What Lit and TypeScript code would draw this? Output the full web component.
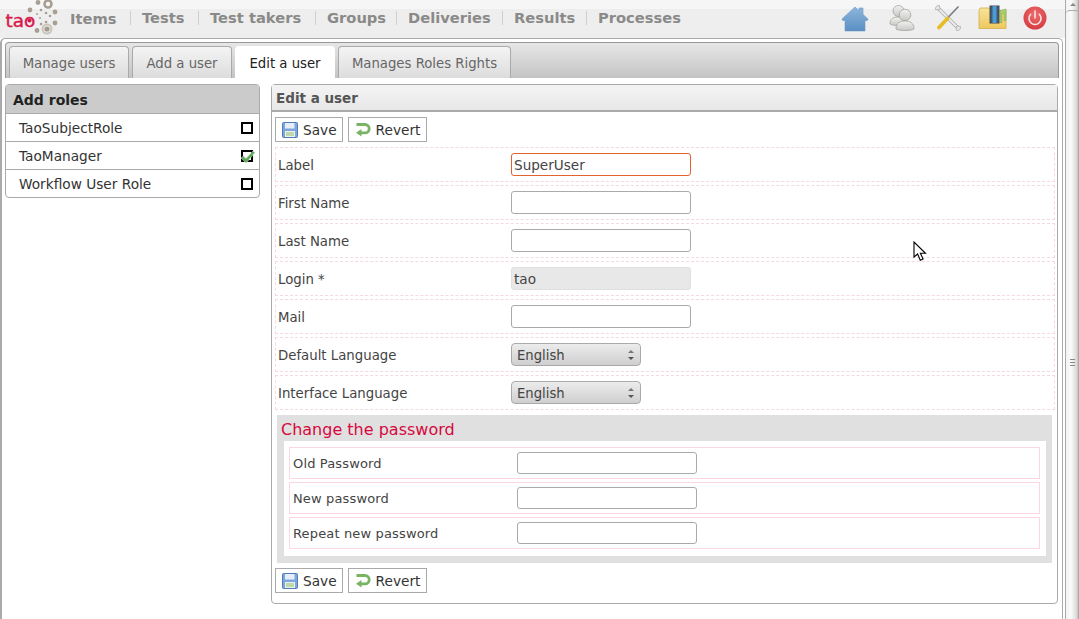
import { LitElement, css, html, svg } from 'lit';
import { customElement } from 'lit/decorators.js';

// widths read off the reference, the hinted text there doesn't scale evenly
const NAV = [
  { name: 'Items', width: 48 },
  { name: 'Tests', width: 44 },
  { name: 'Test takers', width: 93 },
  { name: 'Groups', width: 57 },
  { name: 'Deliveries', width: 82 },
  { name: 'Results', width: 60 },
  { name: 'Processes', width: 82 },
];
const TABS = [
  { name: 'Manage users', width: 120 },
  { name: 'Add a user', width: 100 },
  { name: 'Edit a user', width: 100 },
  { name: 'Manages Roles Rights', width: 173 },
];
const ROLES = [
  { name: 'TaoSubjectRole', checked: false },
  { name: 'TaoManager', checked: true },
  { name: 'Workflow User Role', checked: false },
];
const PASSWORDS = ['Old Password', 'New password', 'Repeat new password'];

const logo = svg`<svg width="60" height="38" viewBox="0 0 60 38">
  <circle cx="48" cy="5" r="3.500" fill="none" stroke="#a89f92" stroke-width="2.600"/>
  <circle cx="47" cy="30" r="2.600" fill="#a3998c"/>
  <circle cx="47" cy="30" r="4.500" fill="none" stroke="#c9c3b9" stroke-width="2"/>
  <circle cx="38" cy="3.500" r="2.400" fill="#a89f92"/><circle cx="30" cy="11" r="2.400" fill="#a89f92"/>
  <circle cx="55" cy="13" r="2.400" fill="#a89f92"/><circle cx="55" cy="24" r="2.400" fill="#a89f92"/>
  <circle cx="37" cy="31.500" r="2.400" fill="#a89f92"/><circle cx="41" cy="11" r="1.300" fill="#a89f92"/>
  <circle cx="46" cy="14" r="1.300" fill="#a89f92"/><circle cx="50" cy="17" r="1.300" fill="#a89f92"/>
  <circle cx="46" cy="23" r="1.300" fill="#a89f92"/><circle cx="41" cy="25" r="1.300" fill="#a89f92"/>
  <circle cx="37" cy="15" r="1" fill="#a89f92"/><circle cx="40" cy="19" r="1" fill="#a89f92"/>
  <text x="5.500" y="27.500" font-family="'DejaVu Sans', sans-serif" font-size="18.500" fill="#d8174a" stroke="#d8174a" stroke-width=".4">tao</text>
  <circle cx="29.500" cy="21.500" r="2" fill="#d8174a"/>
</svg>`;

const homeIcon = svg`<svg width="28" height="28" viewBox="0 0 28 28">
  <defs><linearGradient id="h" x1="0" y1="0" x2="0" y2="1"><stop offset="0" stop-color="#8db6dc"/><stop offset="1" stop-color="#5a8fc3"/></linearGradient></defs>
  <path d="M1 15 14 3l4 3.600V4h4v6.400L27 15l-.6 1.400H24V27H4V16.400H1.600z" fill="url(#h)" stroke="#6b97c2" stroke-width=".6"/>
</svg>`;

const usersIcon = svg`<svg width="28" height="28" viewBox="0 0 28 28">
  <defs><linearGradient id="u" x1="0" y1="0" x2="0" y2="1"><stop offset="0" stop-color="#f2f2f0"/><stop offset="1" stop-color="#c8c8c5"/></linearGradient></defs>
  <g fill="url(#u)" stroke="#a3a3a0" stroke-width=".8">
    <circle cx="10.500" cy="7" r="5.500"/><path d="M2 20c0-5 3-7 8-7s8 2 8 7c-3 2-13 2-16 0z"/>
    <circle cx="17" cy="11" r="5.800"/><path d="M8 25c0-6 4-8 9-8s9 2 9 8c-3 2-15 2-18 0z"/>
  </g>
</svg>`;

const toolsIcon = svg`<svg width="28" height="28" viewBox="0 0 28 28">
  <path d="M5 5 23 23" stroke="#a8a8a8" stroke-width="3.400" stroke-linecap="round"/>
  <path d="M5 5 23 23" stroke="#ececec" stroke-width="2" stroke-linecap="round"/>
  <path d="M1.500 5.500 5 6l1-1-.5-3.500C3 1 1 3 1.500 5.500zM26.500 22.500 23 22l-1 1 .5 3.500c2.500.5 4.500-1.500 4-4z" fill="#e6e6e6" stroke="#a5a5a5" stroke-width=".7"/>
  <path d="M24 3 13 14.500" stroke="#7d8288" stroke-width="1.800" stroke-linecap="round"/>
  <path d="M13.500 14.500 5 23.500" stroke="#e6bd24" stroke-width="3.800" stroke-linecap="round"/>
</svg>`;

const mediaIcon = svg`<svg width="30" height="26" viewBox="0 0 30 26">
  <defs><linearGradient id="f" x1="0" y1="0" x2="0" y2="1"><stop offset="0" stop-color="#f8e39a"/><stop offset="1" stop-color="#eec85e"/></linearGradient></defs>
  <path d="M1 5.500 2 3h9l2 2.500h15V23.500H1z" fill="url(#f)" stroke="#d3ad4c" stroke-width=".8"/>
  <rect x="12" y="1" width="9" height="17" fill="#3d5a78" stroke="#4a4a4a"/>
  <rect x="14.500" y="1" width="4" height="17" fill="#4d9bd2"/>
  <path d="M22 5.500 28 4v11.500h-2V8l-2 .5V17.500h-2z" fill="#a8cf70" stroke="#7fa54a" stroke-width=".5"/>
</svg>`;

const powerIcon = svg`<svg width="24" height="24" viewBox="0 0 24 24">
  <defs><radialGradient id="p" cx=".5" cy=".35" r=".7"><stop offset="0" stop-color="#ee6c6e"/><stop offset="1" stop-color="#d2383e"/></radialGradient></defs>
  <circle cx="12" cy="12" r="11.500" fill="url(#p)"/>
  <path d="M7.700 8.300a6 6 0 1 0 8.600 0" fill="none" stroke="#f6e4e2" stroke-width="1.600" stroke-linecap="round"/>
  <path d="M12 5v7" stroke="#f6e4e2" stroke-width="1.600" stroke-linecap="round"/>
</svg>`;

const saveIcon = svg`<svg width="16" height="16" viewBox="0 0 16 16">
  <rect x=".5" y=".5" width="15" height="15" rx="1" fill="#7ea6dc" stroke="#4f7dbb"/>
  <rect x="3" y="1" width="9.500" height="5.500" fill="#e8eef7"/>
  <rect x="3" y="9" width="10" height="6" fill="#eef3ea"/>
  <path d="M4 11h8M4 13h8" stroke="#8dbd6b" stroke-width="1.200"/>
</svg>`;

const revertIcon = svg`<svg width="16" height="14" viewBox="0 0 16 14">
  <path d="M1.500 1.500H10a4.200 4.200 0 0 1 0 8.400H5" fill="none" stroke="#78b464" stroke-width="2.800"/>
  <path d="M6.500 6v7.500L1 9.800z" fill="#78b464"/>
</svg>`;

const checkMark = svg`<svg class="tick" width="16" height="14" viewBox="0 0 16 14">
  <path d="M1 8l2.500-2 2.500 2.500L13 1l2 1.500L6.200 13z" fill="#5fa85a" stroke="#dff0da" stroke-width=".5"/>
</svg>`;

const cursor = svg`<svg width="14" height="21" viewBox="0 0 14 21">
  <path d="M1 1v15l3.600-3 2.700 6.200 2.800-1.200-2.700-5.700H12.500z" fill="#fff" stroke="#000" stroke-width="1.100"/>
</svg>`;

@customElement('app-root')
export class AppRoot extends LitElement {
  static styles = css`
    :host {
      display: flex;
      position: relative;
      width: 1079px;
      height: 619px;
      overflow: hidden;
      background: #fff;
      color: #444;
      font-family: 'DejaVu Sans', sans-serif;
      font-size: 13.300px;
    }

    .page {
      display: flex;
      flex-direction: column;
      width: 1066px;
    }

    .top {
      display: flex;
      align-items: center;
      height: 38px;
      padding-right: 5px;
      background: linear-gradient(#f6f6f6 0 9px, #eeeeee 9px);
    }

    .logo {
      display: block;
      width: 70px;
      flex: none;
    }

    nav {
      display: flex;
      align-items: center;
      flex: 1;
      margin-top: -2px;
      font-size: 14.700px;
      font-weight: 700;
      color: #8a8a88;
    }

    nav a {
      flex: none;
      box-sizing: content-box;
      white-space: nowrap;
    }

    nav a + a {
      margin-left: 11.500px;
      padding-left: 11.500px;
      border-left: 1px solid #cfcfcf;
      line-height: 14px;
    }

    .tools {
      display: flex;
      align-items: center;
      margin-top: -3px;
    }

    .tools svg {
      display: block;
    }

    .tools .i1 { margin-right: 19px; }
    .tools .i2 { margin-right: 18px; }
    .tools .i3 { margin-right: 16px; }
    .tools .i4 { margin-right: 15px; }
    .tools .i5 { margin-right: 13px; }

    .panel {
      flex: 1;
      width: 1063px;
      padding: 3px 3px 0 3px;
      border-top: 1px solid #aaa;
      border-left: 2px solid #aaa;
      border-right: 1px solid #aaa;
      border-top-left-radius: 5px;
      border-top-right-radius: 5px;
      box-sizing: border-box;
      background: #fff;
    }

    .tabbar {
      display: flex;
      align-items: flex-end;
      gap: 3px;
      height: 36px;
      padding-left: 3px;
      border: 1px solid #999;
      border-bottom: 0;
      border-radius: 4px 4px 0 0;
      box-sizing: border-box;
      background: linear-gradient(#e6e6e6, #c4c4c4);
    }

    .tab {
      flex: none;
      height: 32px;
      border: 1px solid #aaa;
      border-bottom: 0;
      border-radius: 4px 4px 0 0;
      box-sizing: border-box;
      background: linear-gradient(#f4f4f4, #e6e6e6 60%, #dcdcdc);
      color: #666;
      font-size: 13.250px;
      line-height: 33px;
      text-align: center;
      white-space: nowrap;
    }

    .tab.active {
      border-color: #fff;
      background: #fff;
      color: #222;
    }

    .columns {
      display: flex;
      align-items: flex-start;
      gap: 11px;
      margin-top: 6px;
    }

    .roles {
      width: 255px;
      border: 1px solid #aaa;
      border-radius: 4px;
      box-sizing: border-box;
      overflow: hidden;
    }

    .roles h2 {
      margin: 0;
      height: 29px;
      padding-left: 7px;
      box-sizing: border-box;
      background: #cbcbcb;
      border-bottom: 1px solid #aaa;
      color: #222;
      font-size: 14px;
      font-weight: 700;
      line-height: 30px;
    }

    .role {
      display: flex;
      align-items: center;
      justify-content: space-between;
      height: 28px;
      padding: 0 6px 0 13px;
      box-sizing: border-box;
      border-bottom: 1px solid #aaa;
      color: #333;
      font-size: 13.700px;
    }

    .role:last-child {
      border-bottom: 0;
      height: 27px;
    }

    .check {
      position: relative;
      width: 12px;
      height: 12px;
      border: 2px solid #000;
      box-sizing: border-box;
      background: #fff;
    }

    .tick {
      position: absolute;
      left: -3px;
      top: -2px;
    }

    .form {
      width: 787px;
      height: 520px;
      border: 1px solid #aaa;
      border-radius: 4px;
      box-sizing: border-box;
      padding: 0 3px;
    }

    .form h2 {
      margin: 0 -3px;
      height: 27px;
      padding-left: 4px;
      box-sizing: border-box;
      background: linear-gradient(#f2f2f2 0 5px, #e8e8e8);
      border-bottom: 2px solid #aaa;
      color: #555;
      font-size: 13.500px;
      font-weight: 700;
      line-height: 27px;
    }

    .actions {
      display: flex;
      gap: 5px;
    }

    .actions.first {
      margin: 5px 0 5px;
    }

    .actions.last {
      margin-top: 5px;
    }

    .btn {
      display: flex;
      align-items: center;
      gap: 5px;
      height: 25px;
      padding: 0 6px;
      border: 1px solid #aaa;
      box-sizing: border-box;
      color: #333;
      font-size: 13.700px;
    }

    .btn.save {
      padding-right: 5px;
    }

    .btn svg {
      display: block;
    }

    .rows {
      display: flex;
      flex-direction: column;
      gap: 3px;
      width: 780px;
    }

    .row {
      display: flex;
      align-items: center;
      height: 35px;
      padding-left: 2px;
      border: 1px dashed #f5d8e4;
      box-sizing: border-box;
    }

    .row label {
      width: 233px;
      flex: none;
      padding-top: 2px;
    }

    input {
      display: block;
      width: 180px;
      height: 23px;
      padding: 0 2px;
      border: 1px solid #aaa;
      border-radius: 3px;
      box-sizing: border-box;
      background: #fff;
      color: #444;
      font: 13.600px 'DejaVu Sans', sans-serif;
      outline: none;
    }

    input.focus {
      border-color: #e0642c;
    }

    input[disabled] {
      background: #e8e8e8;
      border-color: #e0e0e0;
    }

    .select {
      position: relative;
      width: 130px;
      height: 23px;
    }

    select {
      display: block;
      width: 100%;
      height: 100%;
      padding: 1px 5px 0;
      appearance: none;
      border: 1px solid #aaa;
      border-radius: 4px;
      box-sizing: border-box;
      background: linear-gradient(#ececec, #cfcfcf);
      color: #444;
      font: 13.200px 'DejaVu Sans', sans-serif;
    }

    .select::before,
    .select::after {
      content: '';
      position: absolute;
      right: 7px;
      border-left: 3px solid transparent;
      border-right: 3px solid transparent;
    }

    .select::before {
      top: 7px;
      border-bottom: 3px solid #777;
    }

    .select::after {
      bottom: 6px;
      border-top: 3px solid #555;
    }

    .password {
      width: 775px;
      height: 148px;
      margin: 5px 0 0 2px;
      padding: 0 6px 7px 7px;
      box-sizing: border-box;
      background: #e0e0e0;
    }

    .password h3 {
      margin: 0 0 0 -3px;
      height: 26px;
      color: #d6083f;
      font-size: 16px;
      font-weight: 400;
      line-height: 30px;
    }

    .inner {
      display: flex;
      flex-direction: column;
      gap: 3px;
      height: 115px;
      padding: 6px 6px 0 5px;
      box-sizing: border-box;
      background: #fff;
    }

    .pw-row {
      display: flex;
      align-items: center;
      height: 32px;
      padding-left: 3px;
      border: 1px solid #fad7e3;
      box-sizing: border-box;
      font-size: 13px;
      letter-spacing: 0.15px;
    }

    .pw-row label {
      width: 224px;
      flex: none;
    }

    .pw-row input {
      height: 22px;
    }

    .scrollbar {
      display: flex;
      flex-direction: column;
      width: 13px;
      border-left: 1px solid #aaa;
      background: linear-gradient(90deg, #f4f2f2, #fbfafa 40%, #d8d6d4 85%, #999);
    }

    .arrow {
      align-self: center;
      width: 0;
      height: 0;
      margin: 3px 0 4px;
      border-left: 3px solid transparent;
      border-right: 3px solid transparent;
      border-bottom: 3px solid #888;
    }

    .thumb {
      display: flex;
      justify-content: center;
      flex: 1;
      border-top: 1px solid #aaa;
      border-radius: 4px 4px 0 0;
    }

    .grip {
      width: 5px;
      height: 7px;
      margin-top: 348px;
      background: repeating-linear-gradient(#888 0 1px, transparent 1px 3px);
    }

    .cursor {
      position: absolute;
      left: 913px;
      top: 241px;
    }
  `;

  render() {
    return html`
      <div class="page">
        <header class="top">
          <div class="logo">${logo}</div>
          <nav>${NAV.map((n) => html`<a style="width: ${n.width}px">${n.name}</a>`)}</nav>
          <div class="tools">
            <span class="i1">${homeIcon}</span>
            <span class="i2">${usersIcon}</span>
            <span class="i3">${toolsIcon}</span>
            <span class="i4">${mediaIcon}</span>
            <span class="i5">${powerIcon}</span>
          </div>
        </header>
        <main class="panel">
          <div class="tabbar">
            ${TABS.map(
              (t) => html`<div class="tab ${t.name === 'Edit a user' ? 'active' : ''}" style="width: ${t.width}px">${t.name}</div>`,
            )}
          </div>
          <div class="columns">
            <section class="roles">
              <h2>Add roles</h2>
              ${ROLES.map(
                (r) => html`<div class="role">${r.name}<span class="check">${r.checked ? checkMark : ''}</span></div>`,
              )}
            </section>
            <section class="form">
              <h2>Edit a user</h2>
              ${this.actions('first')}
              <div class="rows">
                ${this.textRow('Label', html`<input class="focus" value="SuperUser" />`)}
                ${this.textRow('First Name', html`<input />`)}
                ${this.textRow('Last Name', html`<input />`)}
                ${this.textRow('Login *', html`<input disabled value="tao" />`)}
                ${this.textRow('Mail', html`<input />`)}
                ${this.textRow('Default Language', this.language())}
                ${this.textRow('Interface Language', this.language())}
              </div>
              <div class="password">
                <h3>Change the password</h3>
                <div class="inner">
                  ${PASSWORDS.map((p) => html`<div class="pw-row"><label>${p}</label><input /></div>`)}
                </div>
              </div>
              ${this.actions('last')}
            </section>
          </div>
        </main>
      </div>
      <div class="scrollbar"><span class="arrow"></span><div class="thumb"><span class="grip"></span></div></div>
      <div class="cursor">${cursor}</div>
    `;
  }

  private textRow(label: string, field: unknown) {
    return html`<div class="row"><label>${label}</label>${field}</div>`;
  }

  private language() {
    return html`<div class="select"><select><option>English</option></select></div>`;
  }

  private actions(where: string) {
    return html`<div class="actions ${where}">
      <div class="btn save">${saveIcon}Save</div>
      <div class="btn">${revertIcon}Revert</div>
    </div>`;
  }
}
